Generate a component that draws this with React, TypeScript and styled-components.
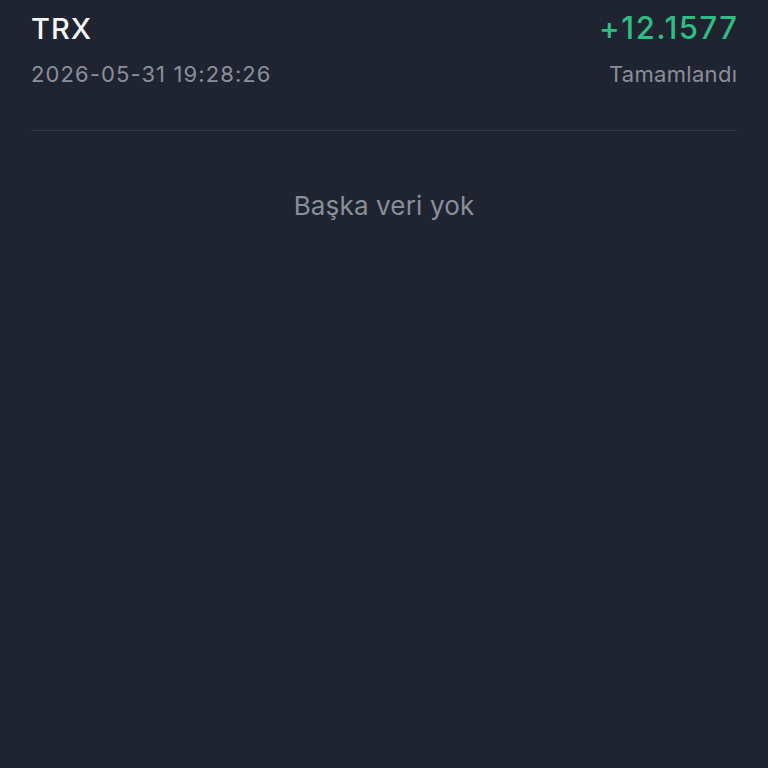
import styled, { createGlobalStyle } from 'styled-components';

const GlobalStyle = createGlobalStyle`
  html, body {
    margin: 0;
    padding: 0;
    background: #1f2430;
  }
  #root {
    min-height: 100vh;
  }
`;

const Page = styled.main`
  min-height: 100vh;
  background-color: #1f2430;
  font-family: Inter, 'Noto Sans', sans-serif;
  padding: 0 31px;
  box-sizing: border-box;
`;

const Record = styled.div`
  display: flex;
  flex-direction: column;
  gap: 14px;
  padding: 9px 0 43px;
  border-bottom: 1px solid #343a47;
`;

const Row = styled.div`
  display: flex;
  justify-content: space-between;
  align-items: baseline;
`;

const Text = styled.span<{ $size: number; $color: string; $weight?: number; $spacing?: number }>`
  font-size: ${(p) => p.$size}px;
  font-weight: ${(p) => p.$weight ?? 400};
  letter-spacing: ${(p) => p.$spacing ?? 0}px;
  margin-right: ${(p) => -(p.$spacing ?? 0)}px;
  color: ${(p) => p.$color};
  line-height: 1.2;
`;

const Empty = styled.div`
  text-align: center;
  padding-top: 59px;
  font-size: 26px;
  letter-spacing: 0.15px;
  color: #8a8f9a;
`;

export default function App() {
  return (
    <Page>
      <GlobalStyle />
      <Record>
        <Row>
          <Text $size={29} $weight={500} $spacing={1} $color="#f4f5f7">TRX</Text>
          <Text $size={31} $weight={500} $spacing={1.5} $color="#2fbd85">+12.1577</Text>
        </Row>
        <Row>
          <Text $size={22} $spacing={1.1} $color="#8a8f9a">2026-05-31 19:28:26</Text>
          <Text $size={22} $spacing={0.3} $color="#8a8f9a">Tamamlandı</Text>
        </Row>
      </Record>
      <Empty>Başka veri yok</Empty>
    </Page>
  );
}
